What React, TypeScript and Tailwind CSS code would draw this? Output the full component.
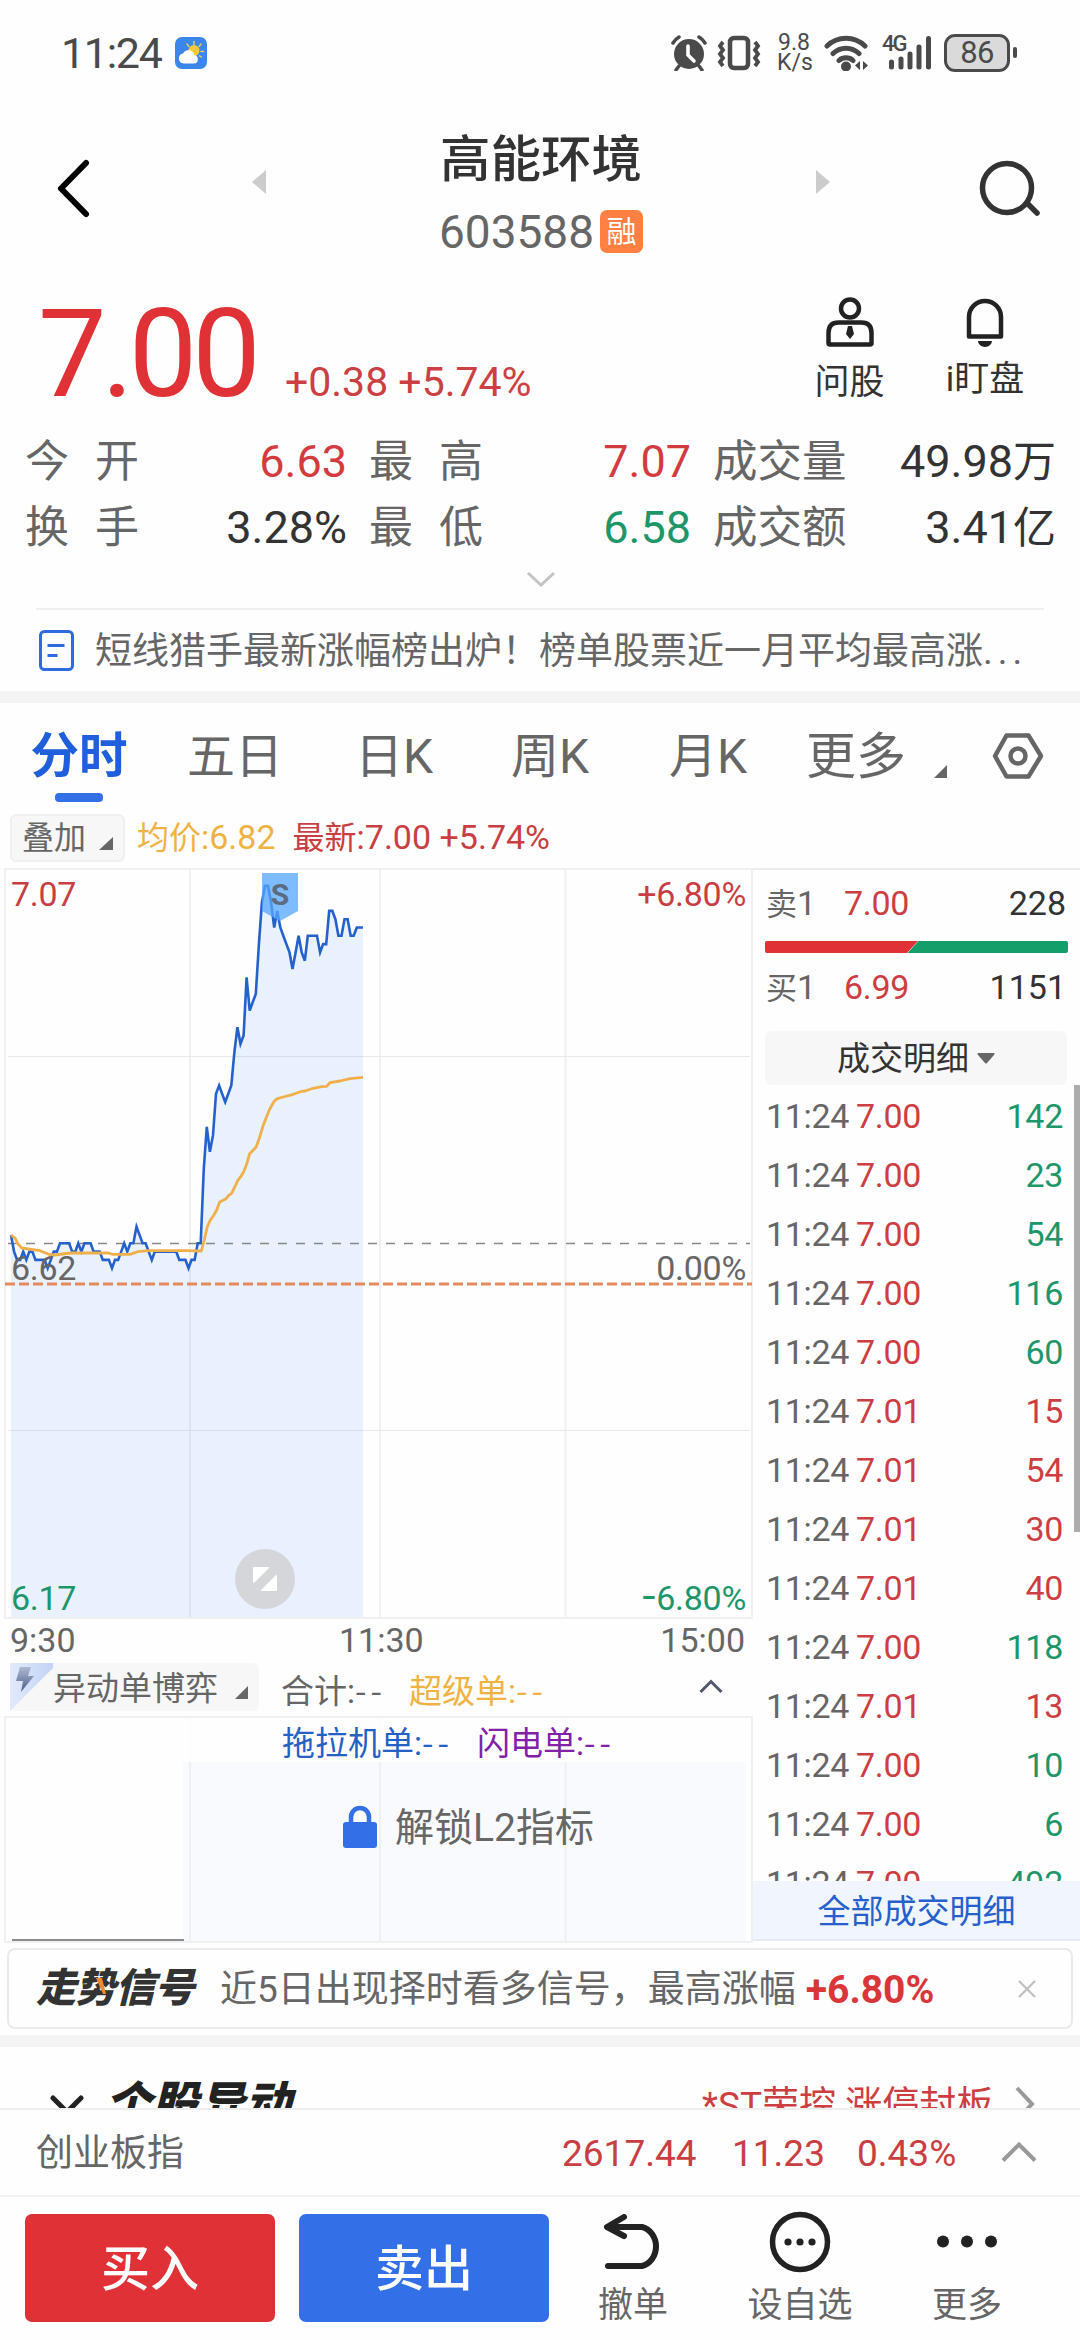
import React from "react";
import clsx from "clsx";

const prices = [
  663, 661, 660, 660, 661, 660, 661, 661, 660, 660, 660, 660, 659, 660, 661,
  661, 662, 662, 662, 662, 661, 661, 662, 661, 662, 662, 662, 661, 661, 661,
  660, 660, 660, 659, 660, 660, 661, 662, 661, 662, 662, 664, 663, 662, 662,
  661, 660, 661, 661, 661, 661, 661, 661, 661, 661, 660, 660, 660, 659, 660,
  660, 662, 662, 671, 676, 673, 675, 680, 681, 680, 679, 680, 681, 685, 688,
  686, 687, 694, 690, 691, 692, 698, 703, 705, 705, 703, 700, 702, 700, 699,
  698, 697, 695, 697, 699, 697, 696, 699, 699, 699, 699, 697, 698, 698, 702,
  702, 701, 699, 699, 701, 701, 699, 699, 700, 700, 700,
];

const linePoints = prices
  .map((p, i) => `${(11 + i * 3.06).toFixed(1)},${((707 - p) * 8.31 + 1.3).toFixed(1)}`)
  .join(" ");

const averagePoints =
  "11,367 15,370 18,376 21.7,380 40,382.7 50,386.7 55,387 70,385 108,385 113,386.3 130,386.3 138,383.7 148,382.7 187,382.7 201.3,383 204.3,372 207.3,358.7 210.3,352 213.3,348 216.7,342 219.7,334 225.7,331 228.7,327.3 231.7,325.3 237.7,312.7 240.7,308.7 243.7,303.7 246.7,296 249.7,285.7 256,279.3 259,271.3 263.3,257 269.3,242 274,233.3 277.3,230.7 283.3,229 293.3,226.3 301.7,223.3 305,223 311.7,220.7 321.7,218.7 326.7,218.3 330,214.7 340,213 350,210.7 363,209.3";

const trades = [
  { price: "7.00", volume: 142, up: false },
  { price: "7.00", volume: 23, up: false },
  { price: "7.00", volume: 54, up: false },
  { price: "7.00", volume: 116, up: false },
  { price: "7.00", volume: 60, up: false },
  { price: "7.01", volume: 15, up: true },
  { price: "7.01", volume: 54, up: true },
  { price: "7.01", volume: 30, up: true },
  { price: "7.01", volume: 40, up: true },
  { price: "7.00", volume: 118, up: false },
  { price: "7.01", volume: 13, up: true },
  { price: "7.00", volume: 10, up: false },
  { price: "7.00", volume: 6, up: false },
  { price: "7.00", volume: 492, up: false },
];

function StatusBar() {
  return (
    <div className="flex h-[105px] shrink-0 items-center pl-[61px] text-[#4a4a4a]">
      <span className="w-[114px] pt-[2px] text-[43px] tracking-[-1.3px]">11:24</span>
      <svg width="32" height="32" viewBox="0 0 32 32">
        <rect width="32" height="32" rx="7" fill="#3b86ea" />
        <g stroke="#f7cf52" strokeWidth="1.4" strokeLinecap="round">
          <path d="M19 4.500v3M12 7l1.800 2.400M26 7l-1.800 2.400M28.500 14.500h-2.500M26.500 20l-2-1.200" />
        </g>
        <circle cx="19" cy="13.500" r="5.500" fill="#f9c83c" />
        <path d="M8.500 26.500a5 5 0 0 1-.5-9.900 6 6 0 0 1 11.300 1.400 4.300 4.300 0 0 1-.3 8.500z" fill="#fff" />
      </svg>
      <svg className="ml-[464px]" width="36" height="36" viewBox="0 0 36 36">
        <circle cx="18" cy="19" r="15" fill="#4a4a4a" />
        <path d="M17 11v9l6 6" fill="none" stroke="#fff" strokeWidth="3.600" strokeLinecap="round" />
        <path d="M2 8a17 17 0 0 1 6-6M34 8a17 17 0 0 0-6-6M8 31l-3 4M28 31l3 4" stroke="#4a4a4a" strokeWidth="3.500" fill="none" strokeLinecap="round" />
      </svg>
      <svg className="ml-[10px]" width="44" height="36" viewBox="0 0 44 36" fill="none" stroke="#4a4a4a">
        <rect x="13" y="3" width="18" height="30" rx="4" strokeWidth="4.500" />
        <path d="M6 7L3 11l3 4-3 4 3 4-3 4 3 4M38 7l3 4-3 4 3 4-3 4 3 4-3 4" strokeWidth="3.800" />
      </svg>
      <div className="ml-[16px] w-[34px] text-center text-[23px] leading-[20px]">
        <div>9.8</div>
        <div>K/s</div>
      </div>
      <svg className="ml-[13px]" width="46" height="36" viewBox="0 0 46 36" fill="none" stroke="#4a4a4a" strokeWidth="5" strokeLinecap="round">
        <path d="M3 11a27 27 0 0 1 38 0M9 18.500a18.500 18.500 0 0 1 26 0M15 25.500a10.500 10.500 0 0 1 14 0" />
        <circle cx="22" cy="31.500" r="2.500" fill="#4a4a4a" />
        <path d="M36 26v9l-5-4.500zM39 26v9l5-4.500z" fill="#4a4a4a" stroke="none" />
      </svg>
      <div className="ml-[12px] flex h-[36px] w-[52px] items-start">
        <span className="-mt-[1px] w-[24px] text-[22px] leading-[20px] font-medium tracking-[-2px]">4G</span>
        <svg className="-ml-[24px] shrink-0" width="52" height="36" viewBox="0 0 52 36" stroke="#4a4a4a" strokeWidth="5" strokeLinecap="round">
          <path d="M9.500 27v5M19 24v8M28 19v13M37 12v20M46.500 3.500v28.500" />
        </svg>
      </div>
      <div className="ml-[10px] flex h-[38px] w-[66px] items-center justify-center rounded-[11px] border-[3px] border-[#4a4a4a] bg-[#dadada] text-[31px] leading-none tracking-tight">
        86
      </div>
      <div className="ml-[3px] h-[11px] w-[4px] rounded-full bg-[#4a4a4a]" />
    </div>
  );
}

function Header() {
  return (
    <div className="flex h-[170px] shrink-0">
      <svg className="mt-[52px] ml-[53px]" width="40" height="64" viewBox="0 0 40 64" fill="none" stroke="#000" strokeWidth="6" strokeLinecap="round" strokeLinejoin="round">
        <path d="M33 6L8 31.500 33 57" />
      </svg>
      <svg className="mt-[65px] ml-[159px]" width="14" height="24" viewBox="0 0 14 24">
        <path d="M14 0v24L0 12z" fill="#ccc" />
      </svg>
      <div className="mx-[120px] flex w-[310px] flex-col items-center">
        <h1 className="mt-[21px] text-[50.500px] leading-[68px] font-medium text-[#333]">高能环境</h1>
        <div className="mt-[16px] flex items-center">
          <span className="text-[46px] leading-[42px] text-[#666]">603588</span>
          <span className="ml-[6px] flex h-[43px] w-[43px] items-center justify-center rounded-[7px] bg-[#ff8042] text-[30px] leading-none text-white">
            融
          </span>
        </div>
      </div>
      <svg className="mt-[65px]" width="14" height="24" viewBox="0 0 14 24">
        <path d="M0 0v24l14-12z" fill="#ccc" />
      </svg>
      <svg className="mt-[53px] ml-[147px]" width="66" height="62" viewBox="0 0 66 62" fill="none" stroke="#333" strokeWidth="5.500" strokeLinecap="round">
        <circle cx="30" cy="30" r="24.500" />
        <path d="M51 46l9 9" />
      </svg>
    </div>
  );
}

function PriceHeader() {
  return (
    <div className="flex h-[149px] shrink-0 pl-[38px]">
      <span className="mt-[15px] w-[247px] text-[122px] leading-[130px] tracking-[-5px] text-[#e03236]">7.00</span>
      <span className="mt-[83px] w-[527px] text-[41px] leading-[48px] text-[#cc4043]">+0.38 +5.74%</span>
      <div className="mt-[22px] flex w-[75px] flex-col items-center">
        <svg width="50" height="50" viewBox="0 0 50 50" fill="none" stroke="#222" strokeWidth="4.500">
          <circle cx="25" cy="11.500" r="9" />
          <path d="M3.500 46V36q0-10.500 10-10.500h23q10 0 10 10.500v10q0 1.500-1.500 1.500h-40q-1.500 0-1.500-1.500z" />
          <path d="M23 29h4l2 8-4 5-4-5z" fill="#222" stroke="none" />
        </svg>
        <span className="mt-[14px] text-[35px] leading-[44px] whitespace-nowrap text-[#333]">问股</span>
      </div>
      <div className="mt-[22px] ml-[53px] flex w-[90px] flex-col items-center">
        <svg width="44" height="50" viewBox="0 0 44 50" fill="none" stroke="#222" strokeWidth="4.500">
          <path d="M6 39.500V20a16 16 0 0 1 32 0v19.500z" strokeLinejoin="round" />
          <path d="M15 44h14a7 6 0 0 1-14 0z" fill="#222" stroke="none" />
        </svg>
        <span className="mt-[11px] text-[35px] leading-[44px] whitespace-nowrap text-[#333]">i盯盘</span>
      </div>
    </div>
  );
}

function Stat({ label, value, color, spread }: { label: string; value: string; color: string; spread?: boolean }) {
  return (
    <div className="flex w-[322px] items-center justify-between">
      <span className={clsx("text-[44px] text-[#666]", spread && "tracking-[26px]")}>{label}</span>
      <span className={clsx("text-[45px] whitespace-nowrap", color)}>{value}</span>
    </div>
  );
}

function Stats() {
  return (
    <div className="flex h-[184px] shrink-0 flex-col items-center">
      <div className="flex h-[68px] w-full gap-[22px] pt-[7px] pl-[25px] leading-[66px]">
        <Stat label="今开" value="6.63" color="text-[#d23c40]" spread />
        <Stat label="最高" value="7.07" color="text-[#d23c40]" spread />
        <div className="flex w-[343px] items-center justify-between">
          <span className="text-[44.500px] text-[#666]">成交量</span>
          <span className="text-[45px] text-[#333]">49.98<span className="text-[43px]">万</span></span>
        </div>
      </div>
      <div className="flex h-[66px] w-full gap-[22px] pt-[5px] pl-[25px] leading-[66px]">
        <Stat label="换手" value="3.28%" color="text-[#333]" spread />
        <Stat label="最低" value="6.58" color="text-[#1f966a]" spread />
        <div className="flex w-[343px] items-center justify-between">
          <span className="text-[44.500px] text-[#666]">成交额</span>
          <span className="text-[45px] text-[#333]">3.41<span className="text-[43px]">亿</span></span>
        </div>
      </div>
      <svg className="mt-[12px] ml-[2px]" width="30" height="20" viewBox="0 0 30 20" fill="none" stroke="#c4c4c4" strokeWidth="3">
        <path d="M2 3l13 12L28 3" />
      </svg>
    </div>
  );
}

function News() {
  return (
    <div className="mx-[36px] flex h-[83px] shrink-0 items-center border-t-2 border-[#efefef]">
      <svg className="ml-[3px]" width="35" height="41" viewBox="0 0 35 41" fill="none" stroke="#2f6be0" strokeWidth="3">
        <rect x="1.500" y="1.500" width="32" height="38" rx="4" />
        <path d="M8.500 15.500h17M8.500 25.500h10" />
      </svg>
      <span className="ml-[21px] flex pt-[2px] text-[37px] leading-[50px] whitespace-nowrap text-[#666]">
        短线猎手最新涨幅榜出炉！榜单股票近一月平均最高涨
        <span className="text-[37px] tracking-[5px]">...</span>
      </span>
    </div>
  );
}

function Tabs() {
  return (
    <div className="flex h-[105px] shrink-0 pt-[20px] text-[48px] leading-[68px] text-[#666]">
      <div className="ml-[30px] flex w-[98px] flex-col items-center">
        <span className="text-[48.500px] font-bold text-[#1f5fdc]">分时</span>
        <div className="mt-[2px] h-[9px] w-[48px] rounded-[4px] bg-[#336fe6]" />
      </div>
      <span className="ml-[59px] w-[168px]">五日</span>
      <span className="w-[156px]">日K</span>
      <span className="w-[158px]">周K</span>
      <span className="w-[137px]">月K</span>
      <span className="w-[128px] text-[50px]">更多</span>
      <svg className="mt-[42px]" width="13" height="13" viewBox="0 0 13 13">
        <path d="M13 0v13H0z" fill="#666" />
      </svg>
      <svg className="mt-[9px] ml-[45px]" width="52" height="48" viewBox="0 0 52 48" fill="none" stroke="#666" strokeWidth="4.500" strokeLinejoin="round">
        <path d="M14.500 3.500h22L49 24 36.500 44.500h-22L3 24z" />
        <circle cx="26" cy="24" r="7.500" />
      </svg>
    </div>
  );
}

function ChartLegend() {
  return (
    <div className="flex h-[60px] shrink-0 items-start pt-[6px] pl-[10px] text-[34px] leading-[46px]">
      <div className="flex h-[48px] w-[115px] items-center rounded-[6px] border-2 border-[#f0f0f0] bg-[#f7f7f7] pl-[10px] text-[32px] text-[#666]">
        叠加
        <svg className="mt-[10px] ml-[13px]" width="14" height="13" viewBox="0 0 14 13">
          <path d="M14 0v13H0z" fill="#666" />
        </svg>
      </div>
      <span className="ml-[12px] text-[#efb345]"><span className="text-[32px]">均价</span>:6.82</span>
      <span className="ml-[17px] text-[#c83e42]"><span className="text-[32px]">最新</span>:7.00 +5.74%</span>
    </div>
  );
}

function PriceChart() {
  return (
    <svg width="753" height="752" viewBox="0 0 753 752" className="block shrink-0 text-[34px]">
      <g fill="none" stroke="#f0f0f0" strokeWidth="2">
        <path d="M5 1h747v749H5zM190 1v749M380 1v749M565.500 1v749" />
        <path d="M8 188.500h742M8 562.500h742" stroke="#e8e8e8" strokeWidth="1" />
      </g>
      <polygon points={`11,749 ${linePoints} 363,749`} fill="#3c78ff" fillOpacity="0.105" />
      <path d="M8 375.500h742" stroke="#888" strokeWidth="1.300" strokeDasharray="9 9" />
      <polyline points={linePoints} fill="none" stroke="#2461cc" strokeWidth="2.600" />
      <polyline points={averagePoints} fill="none" stroke="#efb04c" strokeWidth="2.800" strokeLinejoin="round" />
      <path d="M5 416h747" stroke="#e58a5e" strokeWidth="3" strokeDasharray="10 4" />
      <path d="M263 5h34q1 0 1 1v37l-18 10-18-10V6q0-1 1-1z" fill="#55a5ff" fillOpacity="0.760" />
      <text x="280" y="37" textAnchor="middle" fontSize="30" fontWeight="700" fill="#5c6b80">S</text>
      <g letterSpacing="-0.3">
        <text x="11" y="38" fill="#c83e42">7.07</text>
        <text x="746" y="38" textAnchor="end" fill="#c83e42">+6.80%</text>
        <text x="11" y="412" fill="#666">6.62</text>
        <text x="746" y="412" textAnchor="end" fill="#666">0.00%</text>
        <text x="11" y="742" fill="#1f966a">6.17</text>
        <text x="746" y="742" textAnchor="end" fill="#1f966a">
          <tspan fontFamily="Noto Sans CJK SC" fontSize="44">-</tspan>6.80%
        </text>
      </g>
      <circle cx="265" cy="711" r="30" fill="#d5d6da" />
      <path d="M254 699h14q1.500 0 .5 1.500l-14 14q-1.500 1-1.500-.5v-14q0-1 1-1zM276 723h-14q-1.500 0-.5-1.500l14-14q1.500-1 1.500.5v14q0 1-1 1z" fill="#fff" />
    </svg>
  );
}

function Empty() {
  return <span className="font-['Noto_Sans_CJK_SC'] tracking-[4px]">--</span>;
}

function IndicatorPanel() {
  return (
    <>
      <div className="flex h-[43px] shrink-0 items-center pr-[8px] pl-[10px] text-[34px] leading-[40px] text-[#666]">
        <span className="w-[329px] pb-[3px]">9:30</span>
        <span className="pb-[3px]">11:30</span>
        <span className="ml-auto pb-[3px]">15:00</span>
      </div>
      <div className="flex h-[53px] shrink-0 items-start pl-[10px] text-[33px] leading-[52px] text-[#666]">
        <div className="flex h-[48px] w-[249px] items-center rounded-[6px] bg-[#f7f7f7]">
          <svg className="shrink-0" width="43" height="48" viewBox="0 0 43 48">
            <defs>
              <linearGradient id="bolt" x1="0" y1="0" x2="0" y2="1">
                <stop offset="0" stopColor="#aeb9d0" />
                <stop offset="1" stopColor="#4c5f8c" />
              </linearGradient>
              <linearGradient id="corner" x1="0" y1="0" x2="1" y2="0">
                <stop offset="0" stopColor="#e2eafb" />
                <stop offset="1" stopColor="#c3d3f6" />
              </linearGradient>
            </defs>
            <path d="M0 0h43v5L0 48z" fill="url(#corner)" />
            <path d="M10 4h11l-3 9h6L11 29l2-11H6z" fill="url(#bolt)" />
          </svg>
          <span className="pt-[3px] whitespace-nowrap">异动单博弈</span>
          <svg className="mt-[11px] ml-[17px] shrink-0" width="13" height="13" viewBox="0 0 13 13">
            <path d="M13 0v13H0z" fill="#666" />
          </svg>
        </div>
        <span className="ml-[22px] w-[128px]">合计:<Empty /></span>
        <span className="w-[290px] text-[#efb345]">超级单:<Empty /></span>
        <svg className="mt-[16px]" width="24" height="15" viewBox="0 0 24 15" fill="none" stroke="#50586a" strokeWidth="3">
          <path d="M1.500 13L12 2.500 22.500 13" />
        </svg>
      </div>
      <div className="relative ml-[4px] h-[227px] w-[749px] shrink-0 border-2 border-[#f0f0f0]">
        <svg className="absolute top-0 left-0" width="745" height="223" viewBox="0 0 745 223">
          <path d="M177 0h563v223H177z" fill="#f8fafe" />
          <path d="M184 0v223M374 0v223M559.500 0v223" stroke="#eef0f4" strokeWidth="2" />
          <path d="M6 222h172" stroke="#8c8c8c" strokeWidth="2" />
        </svg>
        <div className="relative ml-[177px] w-[563px]">
          <div className="flex h-[44px] bg-white/80 pl-[99px] text-[33px] leading-[46px] whitespace-nowrap">
            <span className="w-[195px] text-[#2560c4]">拖拉机单:<Empty /></span>
            <span className="text-[#8320a8]">闪电单:<Empty /></span>
          </div>
          <div className="flex h-[130px] items-center pl-[159px] text-[39px] text-[#666]">
            <svg width="36" height="44" viewBox="0 0 36 44">
              <path d="M9 20v-8a9 9 0 0 1 18 0v8" fill="none" stroke="#336fe6" strokeWidth="4.500" />
              <rect x="1" y="17" width="34" height="26" rx="3" fill="#336fe6" />
            </svg>
            <span className="ml-[17px] pt-[2px] whitespace-nowrap">解锁L2指标</span>
          </div>
        </div>
      </div>
    </>
  );
}

function OrderBook() {
  return (
    <div className="flex h-[1075px] w-[327px] flex-col border-t-2 border-[#ebebeb] text-[34px]">
      <div className="flex h-[68px] items-center pr-[14px] pb-px pl-[13px] text-[#666]">
        <span className="w-[78px]"><span className="text-[31px]">卖</span>1</span>
        <span className="tracking-[-0.3px] text-[#cc3e42]">7.00</span>
        <span className="ml-auto text-[#333]">228</span>
      </div>
      <svg className="mt-[3px] ml-[12px] shrink-0" width="303" height="12" viewBox="0 0 303 12">
        <path d="M2 0h151l-11 12H2q-2 0-2-2V2q0-2 2-2z" fill="#e03236" />
        <path d="M153.500 0H301q2 0 2 2v8q0 2-2 2H142.500z" fill="#149e6a" />
      </svg>
      <div className="flex h-[68px] items-center pr-[14px] pl-[13px] text-[#666]">
        <span className="w-[78px]"><span className="text-[31px]">买</span>1</span>
        <span className="tracking-[-0.3px] text-[#cc3e42]">6.99</span>
        <span className="ml-auto text-[#333]">1151</span>
      </div>
      <div className="mt-[10px] ml-[12px] flex h-[54px] w-[302px] shrink-0 items-center justify-center rounded-[6px] bg-[#f7f7f7] text-[33px] text-[#333]">
        <span className="pt-[2px]">成交明细</span>
        <svg className="ml-[8px]" width="18" height="11" viewBox="0 0 18 11">
          <path d="M1.500 0h15q2 0 .5 2L10 10q-1 1-2 0L1 2Q-.5 0 1.500 0z" fill="#666" />
        </svg>
      </div>
      <div className="relative h-[796px] shrink-0 overflow-hidden pt-[2px]">
        {trades.map((trade, index) => (
          <div key={index} className="flex h-[59px] items-center pr-[17px] pl-[13px] leading-[59px] tracking-[-0.3px]">
            <span className="w-[90px] text-[#666]">11:24</span>
            <span className="text-[#cc3e42]">{trade.price}</span>
            <span className={clsx("ml-auto", trade.up ? "text-[#cc3e42]" : "text-[#1f966a]")}>{trade.volume}</span>
          </div>
        ))}
        <div className="absolute top-0 right-0 h-[447px] w-[6px] bg-[#adadad]" />
      </div>
      <div className="flex h-[60px] shrink-0 items-center justify-center border-b-2 border-[#e6eaf2] bg-[#f1f5fe] pt-[4px] text-[33px] text-[#2560cc]">
        全部成交明细
      </div>
    </div>
  );
}

function SignalCard() {
  return (
    <div className="mx-[7px] mt-[5px] flex h-[81px] shrink-0 items-center rounded-[8px] border-2 border-[#eaeaea] whitespace-nowrap">
      <span className="relative ml-[27px] w-[184px] text-[40px] leading-[50px] font-black tracking-[-0.5px] text-[#333] italic">
        走势信号
        <svg className="absolute top-[14px] left-[60px]" width="10" height="16" viewBox="0 0 10 16">
          <path d="M0 0h6l4 16H7z" fill="#f08a2c" />
        </svg>
      </span>
      <span className="pt-[3px] text-[37px] text-[#666]">近5日出现择时看多信号，最高涨幅</span>
      <span className="ml-[10px] w-[212px] pt-[3px] text-[39px] font-bold text-[#d9363a]">+6.80%</span>
      <svg width="18" height="18" viewBox="0 0 18 18" stroke="#c0c0c0" strokeWidth="2.200">
        <path d="M1 1l16 16M17 1L1 17" />
      </svg>
    </div>
  );
}

function AnomalyRow() {
  return (
    <div className="flex h-[61px] shrink-0 items-start overflow-hidden pl-[49px] whitespace-nowrap">
      <svg className="mt-[47px]" width="36" height="22" viewBox="0 0 36 22" fill="none" stroke="#222" strokeWidth="5" strokeLinecap="round">
        <path d="M4 4l14 14L32 4" />
      </svg>
      <span className="mt-[25px] ml-[20px] w-[597px] text-[46.500px] leading-[64px] font-black text-[#222] italic">个股异动</span>
      <span className="mt-[34px] w-[311px] text-[37px] leading-[50px] text-[#cc3e42]">*ST荣控 涨停封板</span>
      <svg className="mt-[38px]" width="24" height="38" viewBox="0 0 24 38" fill="none" stroke="#999" strokeWidth="4">
        <path d="M4 3l15 16L4 35" />
      </svg>
    </div>
  );
}

function IndexBar() {
  return (
    <div className="flex h-[87px] shrink-0 items-center border-t-2 border-[#eee] pt-[2px] pl-[36px] text-[37px] text-[#c83e42]">
      <span className="w-[526px] text-[#666]">创业板指</span>
      <span className="w-[170px]">2617.44</span>
      <span className="w-[125px]">11.23</span>
      <span className="w-[143px]">0.43%</span>
      <svg className="mb-[4px]" width="38" height="22" viewBox="0 0 38 22" fill="none" stroke="#999" strokeWidth="4">
        <path d="M3 19.500L19 3.500l16 16" />
      </svg>
    </div>
  );
}

function BottomBar() {
  return (
    <div className="flex h-[145px] shrink-0 border-t-2 border-[#f2f2f2] pt-[17px] pl-[25px] text-[35px] leading-[44px] text-[#666]">
      <button className="h-[108px] w-[250px] rounded-[7px] bg-[#e03236] pt-[4px] text-[49px] font-medium text-white">买入</button>
      <button className="ml-[24px] h-[108px] w-[250px] rounded-[7px] bg-[#336fe6] pt-[4px] text-[49px] font-medium text-white">卖出</button>
      <div className="ml-[44px] flex w-[80px] flex-col items-center">
        <svg className="h-[60px]" width="62" height="60" viewBox="0 0 62 60" fill="none" stroke="#222" strokeWidth="6" strokeLinecap="round" strokeLinejoin="round">
          <path d="M22 3L5 13l17 9M6 13h34a18 20 0 0 1 0 39H6" />
        </svg>
        <span className="mt-[10px]">撤单</span>
      </div>
      <div className="ml-[72px] flex w-[110px] flex-col items-center">
        <svg className="-mt-[4px] h-[64px]" width="62" height="62" viewBox="0 0 62 62">
          <circle cx="31" cy="31" r="27.500" fill="none" stroke="#222" strokeWidth="5.500" />
          <circle cx="19" cy="31" r="3.600" fill="#222" />
          <circle cx="31" cy="31" r="3.600" fill="#222" />
          <circle cx="43" cy="31" r="3.600" fill="#222" />
        </svg>
        <span className="mt-[10px]">设自选</span>
      </div>
      <div className="ml-[72px] flex w-[80px] flex-col items-center">
        <svg className="h-[60px]" width="62" height="60" viewBox="0 0 62 60" fill="#222">
          <circle cx="7" cy="27.500" r="6" />
          <circle cx="31" cy="27.500" r="6" />
          <circle cx="55" cy="27.500" r="6" />
        </svg>
        <span className="mt-[10px]">更多</span>
      </div>
    </div>
  );
}

export default function App() {
  return (
    <div className="flex h-[2340px] w-[1080px] flex-col overflow-hidden bg-[#fefefe] font-[Roboto,'Noto_Sans_CJK_SC',sans-serif]">
      <StatusBar />
      <Header />
      <PriceHeader />
      <Stats />
      <News />
      <div className="h-[12px] shrink-0 bg-[#f4f4f4]" />
      <Tabs />
      <ChartLegend />
      <div className="flex h-[1075px] shrink-0">
        <div className="flex w-[753px] flex-col">
          <PriceChart />
          <IndicatorPanel />
        </div>
        <OrderBook />
      </div>
      <SignalCard />
      <div className="mt-[6px] h-[12px] shrink-0 bg-[#f4f4f4]" />
      <AnomalyRow />
      <IndexBar />
      <BottomBar />
    </div>
  );
}
